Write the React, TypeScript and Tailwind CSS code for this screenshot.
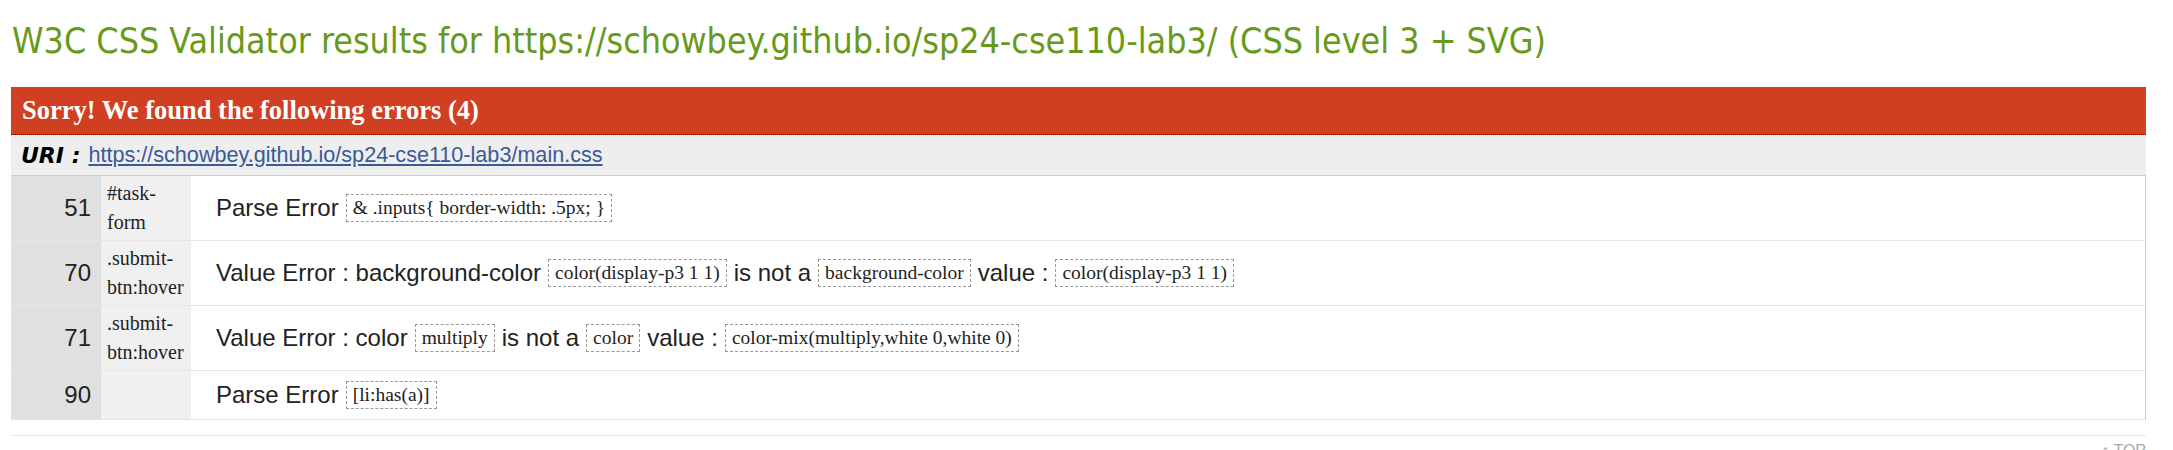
const rows = [
  {
    line: "51",
    context: ["#task-", "form"],
    parts: [{ t: "Parse Error" }, { c: "& .inputs{ border-width: .5px; }" }],
  },
  {
    line: "70",
    context: [".submit-", "btn:hover"],
    parts: [
      { t: "Value Error : background-color" },
      { c: "color(display-p3 1 1)" },
      { t: "is not a" },
      { c: "background-color" },
      { t: "value :" },
      { c: "color(display-p3 1 1)" },
    ],
  },
  {
    line: "71",
    context: [".submit-", "btn:hover"],
    parts: [
      { t: "Value Error : color" },
      { c: "multiply" },
      { t: "is not a" },
      { c: "color" },
      { t: "value :" },
      { c: "color-mix(multiply,white 0,white 0)" },
    ],
  },
  {
    line: "90",
    context: [],
    parts: [{ t: "Parse Error" }, { c: "[li:has(a)]" }],
  },
];

type Part = { t?: string; c?: string };

function Message({ parts }: { parts: Part[] }) {
  return (
    <div className="flex items-center gap-[7px] flex-wrap">
      {parts.map((p, i) =>
        p.c ? (
          <span
            key={i}
            className="inline-block border border-dashed border-[#999] px-[6px] py-[2px] leading-[22px] text-[19.5px] text-[#222] font-['Liberation_Serif',serif]"
          >
            {p.c}
          </span>
        ) : (
          <span key={i} className="whitespace-pre">
            {p.t}
          </span>
        )
      )}
    </div>
  );
}

export default function App() {
  return (
    <div className="w-full h-[450px] overflow-hidden bg-white">
      <h2 className="pl-[12px] pt-[19px] h-[87px] text-[35.5px] leading-[44px] text-[#679a1a] font-['DejaVu_Sans_Condensed','DejaVu_Sans',sans-serif]">
        W3C CSS Validator results for https://schowbey.github.io/sp24-cse110-lab3/ (CSS level 3 + SVG)
      </h2>

      <div className="ml-[11px] mr-[27px]">
        {/* header bar */}
        <div className="h-[48px] bg-[#d13f23] border-b border-dotted border-[#222] flex items-center pl-[11px]">
          <span className="text-white font-bold text-[26.5px] font-['Liberation_Serif',serif]">
            Sorry! We found the following errors (4)
          </span>
        </div>

        {/* uri row */}
        <div className="h-[41px] bg-[#eeeeee] border-b border-[#cccccc] flex items-center pl-[10px] gap-[8px]">
          <span className="font-bold italic text-[22px] text-black font-['DejaVu_Sans',sans-serif]">
            URI :
          </span>
          <a
            href="#"
            className="underline text-[21.6px] text-[#3a5b96] font-['Liberation_Sans',sans-serif]"
          >
            https://schowbey.github.io/sp24-cse110-lab3/main.css
          </a>
        </div>

        {/* error rows */}
        <div className="border-r border-[#cccccc]">
          {rows.map((r) => (
            <div
              key={r.line}
              className="grid grid-cols-[90px_90px_1fr] border-b border-[#f0e2e2]"
            >
              <div className="bg-[#e0e0e0] flex items-center justify-end pr-[10px] text-[24px] text-[#222] font-['Liberation_Sans',sans-serif]">
                {r.line}
              </div>
              <div className="bg-[#f0f0f0] pl-[6px] py-[3px] flex flex-col justify-center text-[20px] leading-[29px] text-[#222] font-['Liberation_Serif',serif]">
                {r.context.map((c) => (
                  <span key={c}>{c}</span>
                ))}
              </div>
              <div className="pl-[25px] py-[10px] min-h-[48px] flex items-center text-[24px] leading-[28px] text-[#222] font-['Liberation_Sans',sans-serif]">
                <Message parts={r.parts} />
              </div>
            </div>
          ))}
        </div>

        <div className="mt-[15px] border-t border-[#e8e8e8] flex justify-end pt-[3px]">
          <span className="text-[16px] text-[#aaaaaa] font-['Liberation_Sans',sans-serif]">↑ TOP</span>
        </div>
      </div>
    </div>
  );
}
